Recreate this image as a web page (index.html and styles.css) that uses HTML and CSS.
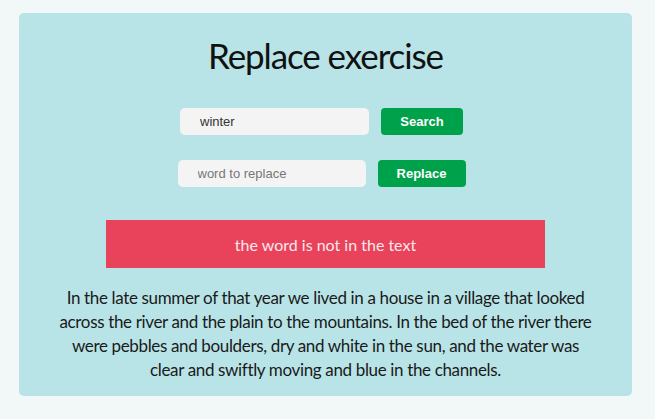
FILE: index.html
```html
<!DOCTYPE html>
<html>
<head>
<meta charset="utf-8">
<link rel="stylesheet" href="styles.css">
</head>
<body>
<main class="card">
  <h1 class="title">Replace exercise</h1>
  <div class="row row-search">
    <input class="field" type="text" value="winter">
    <button class="btn">Search</button>
  </div>
  <div class="row row-replace">
    <input class="field" type="text" placeholder="word to replace">
    <button class="btn btn-wide">Replace</button>
  </div>
  <div class="alert">the word is not in the text</div>
  <p class="text">In the late summer of that year we lived in a house in a village that looked across the river and the plain to the mountains. In the bed of the river there were pebbles and boulders, dry and white in the sun, and the water was clear and swiftly moving and blue in the channels.</p>
</main>
</body>
</html>
```
FILE: styles.css
```css
html, body { margin: 0; padding: 0; }
body {
  background: #f2f7f8;
  padding: 13px 23px 0 19px;
}
.card {
  background: #b8e4e7;
  border-radius: 5px;
  height: 383px;
  box-sizing: border-box;
  padding: 22px 0 0;
  display: flex;
  flex-direction: column;
  align-items: center;
  font-family: "Lato", sans-serif;
  color: #111;
}
.title {
  margin: 0;
  font-weight: 400;
  font-size: 35px;
  line-height: 40px;
  letter-spacing: -1.1px;
}
.row {
  display: flex;
  gap: 12px;
  margin-right: 8px;
}
.row-search { margin-top: 33px; }
.row-replace { margin-top: 25px; }
.field {
  box-sizing: border-box;
  width: 189px;
  height: 27px;
  border: none;
  border-radius: 5px;
  background: #f4f4f4;
  padding: 0 20px;
  font-family: "Liberation Sans", Arial, sans-serif;
  font-size: 13px;
  color: #333;
  outline: none;
}
.row-replace .field { width: 188px; }
.field::placeholder { color: #777; }
.btn {
  box-sizing: border-box;
  width: 82px;
  height: 27px;
  border: none;
  border-radius: 4px;
  background: #00a14b;
  color: #fff;
  font-family: "Liberation Sans", Arial, sans-serif;
  font-weight: 700;
  font-size: 13px;
}
.btn-wide { width: 88px; }
.alert {
  margin-top: 33px;
  width: 439px;
  height: 48px;
  background: #e8435a;
  color: #fbe8ec;
  font-size: 16px;
  display: flex;
  align-items: center;
  justify-content: center;
}
.text {
  margin: 18px 0 0;
  width: 542px;
  text-align: center;
  font-size: 17px;
  line-height: 24px;
  letter-spacing: -0.35px;
  color: #1a1a1a;
}
```
